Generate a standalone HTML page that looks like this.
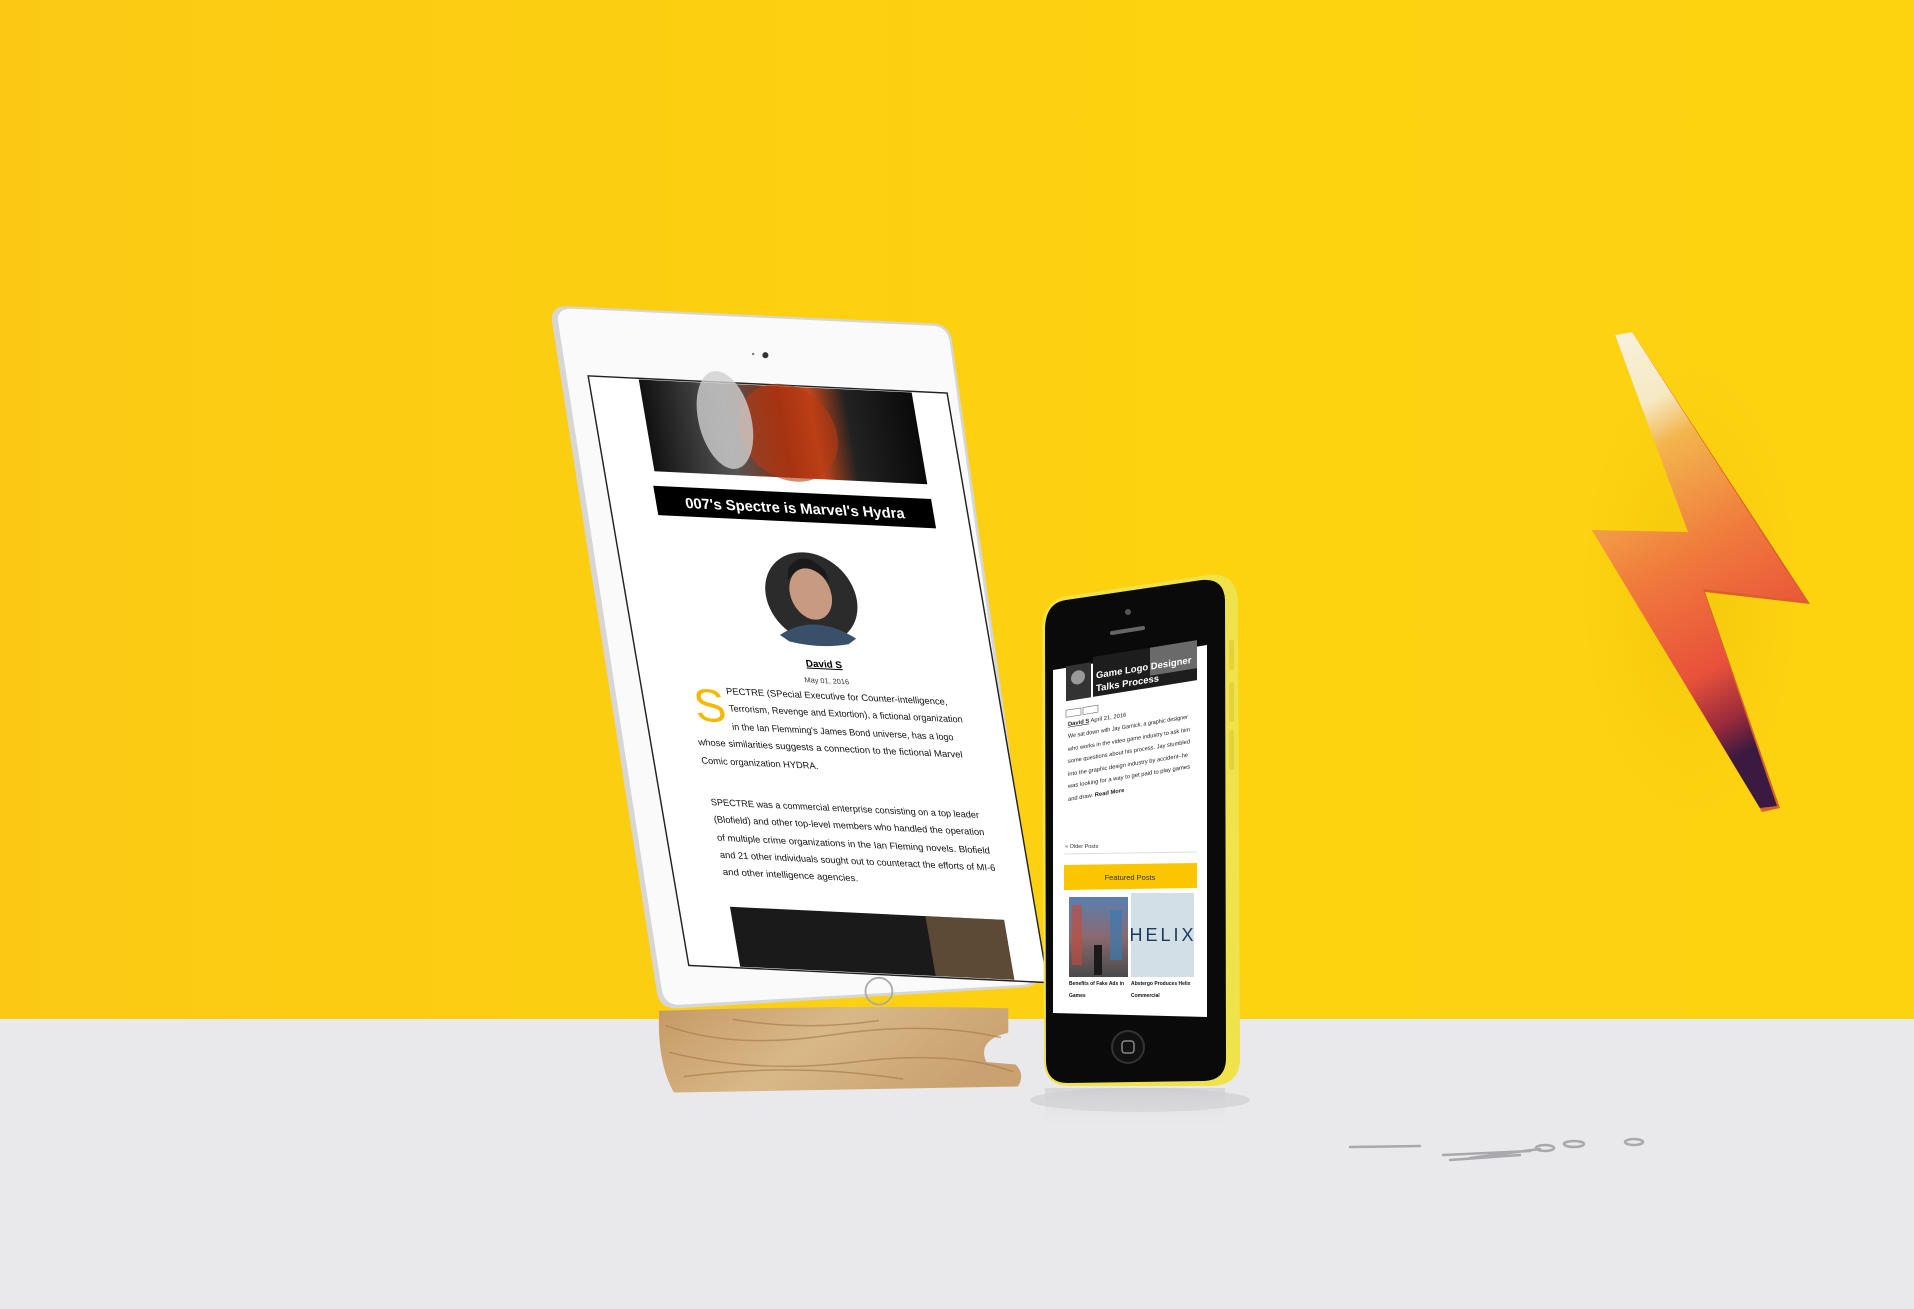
<!DOCTYPE html>
<html><head><meta charset="utf-8"><style>
html,body{margin:0;padding:0;width:1914px;height:1309px;overflow:hidden;background:#e9e9eb}
svg{display:block}
text{font-family:"Liberation Sans",sans-serif}
</style></head><body>
<svg width="1914" height="1309" viewBox="0 0 1914 1309" xmlns="http://www.w3.org/2000/svg">
<defs>
<linearGradient id="bg" x1="0" y1="0" x2="1" y2="0"><stop offset="0" stop-color="#fbc914"/><stop offset="0.5" stop-color="#fdd10f"/><stop offset="1" stop-color="#fdd310"/></linearGradient>
<linearGradient id="bolt" x1="0" y1="0" x2="0.25" y2="1"><stop offset="0" stop-color="#f8f3e0"/><stop offset="0.2" stop-color="#f6e9c4"/><stop offset="0.3" stop-color="#f2b54d"/><stop offset="0.55" stop-color="#f07a3c"/><stop offset="0.8" stop-color="#e8513a"/><stop offset="0.92" stop-color="#9a2a3a"/><stop offset="1" stop-color="#3a1a40"/></linearGradient>
<linearGradient id="wood" x1="0" y1="0" x2="1" y2="0.3"><stop offset="0" stop-color="#c49a66"/><stop offset="0.5" stop-color="#d9b887"/><stop offset="1" stop-color="#c9a270"/></linearGradient>
<linearGradient id="hdr" x1="0" y1="0" x2="1" y2="0"><stop offset="0" stop-color="#111"/><stop offset="0.3" stop-color="#555"/><stop offset="0.5" stop-color="#8a2a10"/><stop offset="0.62" stop-color="#c4461a"/><stop offset="0.75" stop-color="#222"/><stop offset="1" stop-color="#0a0a0a"/></linearGradient>
<linearGradient id="city" x1="0" y1="0" x2="0" y2="1"><stop offset="0" stop-color="#5a7fb0"/><stop offset="0.5" stop-color="#8a6a70"/><stop offset="1" stop-color="#4a4a4a"/></linearGradient>
<linearGradient id="phshadow" x1="0" y1="0" x2="0" y2="1"><stop offset="0" stop-color="#c8c8cc"/><stop offset="1" stop-color="#e9e9eb" stop-opacity="0"/></linearGradient>
<radialGradient id="boltsh" cx="0.5" cy="0.5" r="0.5"><stop offset="0" stop-color="#d9a800" stop-opacity="0.25"/><stop offset="1" stop-color="#e0b000" stop-opacity="0"/></radialGradient>
</defs>
<rect x="0" y="0" width="1914" height="1020" fill="url(#bg)"/>
<rect x="0" y="1019" width="1914" height="290" fill="#e9e9eb"/>

<!-- bolt -->
<ellipse cx="1690" cy="590" rx="110" ry="230" fill="url(#boltsh)"/>
<polygon points="1592,530 1690,535 1615,335 1632,332 1810,604 1705,592 1780,808 1762,812" fill="#d9602a"/>
<polygon points="1592,530 1688,532 1615,335 1632,332 1806,601 1703,589 1777,806 1760,808" fill="url(#bolt)"/>

<!-- paperclips -->
<g stroke="#a9a9ad" stroke-width="2.5" fill="none" stroke-linecap="round">
<path d="M1350,1147 L1420,1146"/>
<path d="M1443,1155 L1530,1151 M1450,1160 L1520,1155 M1470,1158 L1540,1149"/>
<ellipse cx="1545" cy="1148" rx="9" ry="3"/><ellipse cx="1574" cy="1144" rx="10" ry="3"/><ellipse cx="1634" cy="1142" rx="9" ry="3"/>
</g>

<g transform="scale(1.2207)">
<path d="M540,828 Q538,870 552,895 L834,890 Q840,880 832,872 L808,870 Q800,852 826,846 L826,826 Q700,823 540,828 Z" fill="url(#wood)"/>
<g stroke="#a9804f" stroke-width="1.2" fill="none" opacity="0.7">
<path d="M545,840 Q600,860 680,848 T820,850"/><path d="M548,862 Q620,880 700,870 T830,878"/><path d="M560,882 Q650,870 740,884"/><path d="M600,835 Q660,845 720,836"/>
</g>
<path d="M452,262 Q452,250 466,251 L765,265 Q778,266 780,280 L852,792 Q854,808 838,809 L556,826 Q540,827 538,812 Z" fill="#d6d6d6"/>
<path d="M457,262 Q457,252 470,253 L765,267 Q776,268 778,280 L849,792 Q851,806 836,807 L558,823 Q544,824 542,810 Z" fill="#fafafa"/>
<circle cx="627" cy="291" r="2.5" fill="#333"/><circle cx="617" cy="290" r="1" fill="#777"/>
<circle cx="720" cy="812" r="11" fill="none" stroke="#aaa" stroke-width="1.5"/>
<g transform="matrix(1.007,0.048,0.171,1.002,483,309)">
<rect x="-1" y="-1" width="292" height="482" fill="#fff" stroke="#222" stroke-width="1.2"/>
<rect x="40" y="0" width="222" height="75" fill="url(#hdr)"/>
<ellipse cx="155" cy="38" rx="40" ry="40" fill="#b83a12" opacity="0.6"/>
<ellipse cx="105" cy="30" rx="22" ry="40" fill="#cfcfcf" opacity="0.8"/>
<rect x="37" y="87" width="226" height="24" fill="#000"/>
<text x="150" y="104" fill="#fff" font-size="12" font-weight="bold" text-anchor="middle">007's Spectre is Marvel's Hydra</text>
<circle cx="151" cy="173" r="37" fill="#2b2b2b"/>
<ellipse cx="151" cy="170" rx="17" ry="21" fill="#c99a82"/>
<path d="M134,160 Q150,138 168,160 L166,150 Q150,132 136,150 Z" fill="#1a1a1a"/>
<path d="M120,205 Q151,185 182,205 L175,210 Q151,215 127,210 Z" fill="#3a4f6a"/>
<text x="152" y="230" font-size="8" font-weight="bold" text-anchor="middle" text-decoration="underline">David S</text>
<text x="152" y="243" font-size="6" text-anchor="middle" fill="#333">May 01, 2016</text>
<text x="40" y="279" font-size="38" fill="#f5b800" font-weight="300">S</text>
<g font-size="7.6" fill="#111">
<text x="68" y="256" textLength="180" lengthAdjust="spacingAndGlyphs">PECTRE (SPecial Executive for Counter-intelligence,</text>
<text x="68" y="270" textLength="190" lengthAdjust="spacingAndGlyphs">Terrorism, Revenge and Extortion), a fictional organization</text>
<text x="68" y="285" textLength="180" lengthAdjust="spacingAndGlyphs">in the Ian Flemming's James Bond universe, has a logo</text>
<text x="38" y="299" textLength="215" lengthAdjust="spacingAndGlyphs">whose similarities suggests a connection to the fictional Marvel</text>
<text x="38" y="314" textLength="95" lengthAdjust="spacingAndGlyphs">Comic organization HYDRA.</text>
<text x="40" y="348" textLength="218" lengthAdjust="spacingAndGlyphs">SPECTRE was a commercial enterprise consisting on a top leader</text>
<text x="40" y="362" textLength="220" lengthAdjust="spacingAndGlyphs">(Blofield) and other top-level members who handled the operation</text>
<text x="40" y="377" textLength="222" lengthAdjust="spacingAndGlyphs">of multiple crime organizations in the Ian Fleming novels. Blofield</text>
<text x="40" y="391" textLength="224" lengthAdjust="spacingAndGlyphs">and 21 other individuals sought out to counteract the efforts of MI-6</text>
<text x="40" y="405" textLength="110" lengthAdjust="spacingAndGlyphs">and other intelligence agencies.</text>
</g>
<rect x="41" y="431" width="223" height="49" fill="#1a1a1a"/>
<rect x="200" y="431" width="64" height="49" fill="#8a6a4a" opacity="0.6"/>
</g>
</g>

<ellipse cx="1140" cy="1100" rx="110" ry="12" fill="#cfcfd2" opacity="0.7"/>
<rect x="1045" y="1088" width="180" height="40" fill="url(#phshadow)" opacity="0.6"/>
<path d="M1068,596 L1208,575 Q1236,572 1238,600 L1240,1058 Q1240,1085 1212,1086 L1070,1086 Q1044,1086 1044,1060 L1042,630 Q1042,600 1068,596 Z" fill="#efe24a"/>
<path d="M1066,600 L1202,580 Q1224,578 1225,600 L1226,1058 Q1226,1080 1204,1081 L1068,1083 Q1046,1083 1046,1060 L1045,630 Q1045,603 1066,600 Z" fill="#0a0a0a"/>
<rect x="1229" y="640" width="5" height="30" rx="2" fill="#e3d23a"/>
<rect x="1229" y="682" width="5" height="40" rx="2" fill="#e3d23a"/>
<rect x="1229" y="730" width="5" height="40" rx="2" fill="#e3d23a"/>
<circle cx="1128" cy="612" r="3" fill="#555"/>
<path d="M1112,633 L1143,628" stroke="#666" stroke-width="4" stroke-linecap="round"/>
<circle cx="1128" cy="1047" r="16" fill="#111" stroke="#333" stroke-width="2"/>
<rect x="1122" y="1041" width="12" height="12" rx="3" fill="none" stroke="#888" stroke-width="1.5"/>
<polygon points="1053,670 1207,645 1207,1017 1053,1013" fill="#fff"/>
<g transform="matrix(1,-0.162,0,1,0,0)">
<g transform="translate(0,172)">
<rect x="1066" y="667" width="25" height="35" fill="#333"/>
<circle cx="1078" cy="680" r="7" fill="#999"/>
<rect x="1093" y="662" width="104" height="40" fill="#1d1d1d"/>
<rect x="1150" y="662" width="47" height="28" fill="#6a6a6a"/>
<text x="1096" y="684" fill="#fff" font-size="9.5" font-weight="bold">Game Logo Designer</text>
<text x="1096" y="697" fill="#fff" font-size="9.5" font-weight="bold">Talks Process</text>
<rect x="1066" y="711" width="15" height="7" fill="none" stroke="#666" stroke-width="0.6"/>
<rect x="1083" y="711" width="15" height="7" fill="none" stroke="#666" stroke-width="0.6"/>
<g font-size="5.8" fill="#222">
<text x="1068" y="727"><tspan font-weight="bold" text-decoration="underline">David S</tspan>  April 21, 2016</text>
<text x="1068" y="739" textLength="120" lengthAdjust="spacingAndGlyphs">We sat down with Jay Garnick, a graphic designer</text>
<text x="1068" y="752" textLength="122" lengthAdjust="spacingAndGlyphs">who works in the video game industry to ask him</text>
<text x="1068" y="764" textLength="122" lengthAdjust="spacingAndGlyphs">some questions about his process. Jay stumbled</text>
<text x="1068" y="777" textLength="120" lengthAdjust="spacingAndGlyphs">into the graphic design industry by accident–he</text>
<text x="1068" y="789" textLength="122" lengthAdjust="spacingAndGlyphs">was looking for a way to get paid to play games</text>
<text x="1068" y="802">and draw.  <tspan font-weight="bold">Read More</tspan></text>
</g>
</g>
</g>
<text x="1065" y="848" font-size="5.5" fill="#333">« Older Posts</text>
<line x1="1064" y1="854" x2="1197" y2="852" stroke="#ddd" stroke-width="1"/>
<polygon points="1064,865 1197,863 1197,888 1064,890" fill="#fbc500"/>
<text x="1130" y="880" font-size="7.5" fill="#333" text-anchor="middle">Featured Posts</text>
<rect x="1069" y="897" width="59" height="80" fill="url(#city)"/>
<rect x="1072" y="905" width="10" height="60" fill="#c84a3a" opacity="0.6"/>
<rect x="1110" y="910" width="12" height="50" fill="#3a7ab0" opacity="0.7"/>
<rect x="1094" y="945" width="8" height="30" fill="#1a1a1a"/>
<rect x="1131" y="893" width="63" height="84" fill="#d2dfe6"/>
<text x="1163" y="941" font-size="18" fill="#1c3a5a" text-anchor="middle" letter-spacing="3">HELIX</text>
<g font-size="5" fill="#111" font-weight="bold">
<text x="1069" y="985">Benefits of Fake Ads in</text><text x="1069" y="997">Games</text>
<text x="1131" y="985">Abstergo Produces Helix</text><text x="1131" y="997">Commercial</text>
</g>
</svg>
</body></html>
